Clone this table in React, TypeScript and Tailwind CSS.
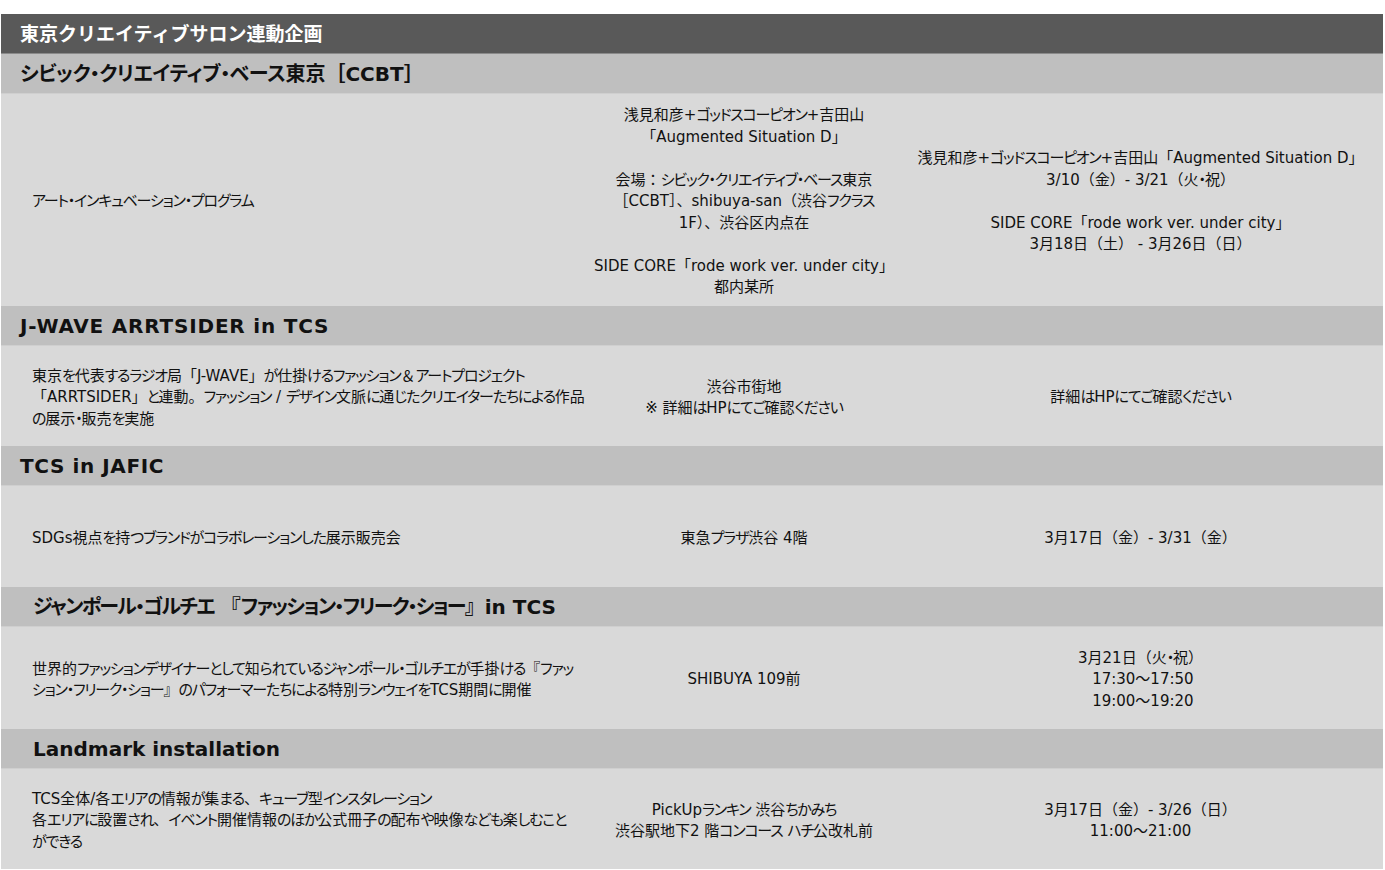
import React from "react";

type Row = {
  title: string;
  indent?: boolean;
  kanaCls: string;
  latinCls: string;
  c1: string[];
  c2: string[];
  c3: string[];
  h: string;
};

const rows: Row[] = [
  {
    title: "シビック・クリエイティブ・ベース東京［CCBT］",
    kanaCls: "[font-feature-settings:'palt'] tracking-[-0.4px]",
    latinCls: "tracking-[0px]",
    c1: ["アート・インキュベーション・プログラム"],
    c2: [
      "浅見和彦+ゴッドスコーピオン+吉田山",
      "「Augmented Situation D」",
      "",
      "会場：シビック・クリエイティブ・ベース東京",
      "［CCBT］、shibuya-san（渋谷フクラス",
      "1F）、渋谷区内点在",
      "",
      "SIDE CORE「rode work ver. under city」",
      "都内某所",
    ],
    c3: [
      "浅見和彦+ゴッドスコーピオン+吉田山「Augmented Situation D」",
      "3/10（金）- 3/21（火・祝）",
      "",
      "SIDE CORE「rode work ver. under city」",
      "3月18日（土） - 3月26日（日）",
    ],
    h: "h-[212px]",
  },
  {
    title: "J-WAVE ARRTSIDER in TCS",
    kanaCls: "[font-feature-settings:'palt'] tracking-[-1.2px]",
    latinCls: "tracking-[0.8px]",
    c1: [
      "東京を代表するラジオ局「J-WAVE」が仕掛けるファッション＆アートプロジェクト",
      "「ARRTSIDER」と連動。ファッション / デザイン文脈に通じたクリエイターたちによる作品",
      "の展示・販売を実施",
    ],
    c2: ["渋谷市街地", "※ 詳細はHPにてご確認ください"],
    c3: ["詳細はHPにてご確認ください"],
    h: "h-[100px]",
  },
  {
    title: "TCS in JAFIC",
    kanaCls: "[font-feature-settings:'palt'] tracking-[-1.2px]",
    latinCls: "tracking-[0.6px]",
    c1: ["SDGs視点を持つブランドがコラボレーションした展示販売会"],
    c2: ["東急プラザ渋谷 4階"],
    c3: ["3月17日（金）- 3/31（金）"],
    h: "h-[101px]",
  },
  {
    title: "ジャンポール・ゴルチエ 『ファッション・フリーク・ショー』in TCS",
    indent: true,
    kanaCls: "[font-feature-settings:'palt'] tracking-[-1.7px]",
    latinCls: "tracking-[0px]",
    c1: [
      "世界的ファッションデザイナーとして知られているジャンポール・ゴルチエが手掛ける『ファッ",
      "ション・フリーク・ショー』のパフォーマーたちによる特別ランウェイをTCS期間に開催",
    ],
    c2: ["SHIBUYA 109前"],
    c3: ["3月21日（火・祝）", "\u00a017:30～17:50", "\u00a019:00～19:20"],
    h: "h-[102px]",
  },
  {
    title: "Landmark installation",
    indent: true,
    kanaCls: "[font-feature-settings:'palt'] tracking-[-1.2px]",
    latinCls: "tracking-[0px]",
    c1: [
      "TCS全体/各エリアの情報が集まる、キューブ型インスタレーション",
      "各エリアに設置され、イベント開催情報のほか公式冊子の配布や映像なども楽しむこと",
      "ができる",
    ],
    c2: ["PickUpランキン 渋谷ちかみち", "渋谷駅地下2 階コンコース ハチ公改札前"],
    c3: ["3月17日（金）- 3/26（日）", "11:00～21:00"],
    h: "h-[100px]",
  },
];

const KANA = /([\u3040-\u30FF]+)/;

function Seg({ text, kanaCls }: { text: string; kanaCls: string }) {
  const parts = text.split(KANA);
  return (
    <>
      {parts.map((p, i) =>
        i % 2 === 1 ? (
          <span key={i} className={kanaCls}>
            {p}
          </span>
        ) : (
          <React.Fragment key={i}>{p}</React.Fragment>
        )
      )}
    </>
  );
}

const BODY_KANA = "[font-feature-settings:'palt'] tracking-[-1.2px]";

function Lines({ lines, center }: { lines: string[]; center?: boolean }) {
  return (
    <div className={center ? "text-center" : "text-left"}>
      {lines.map((l, i) => (
        <div key={i} className="whitespace-nowrap h-[21.5px] leading-[21.5px]">
          {l === "" ? "\u00a0" : <Seg text={l} kanaCls={BODY_KANA} />}
        </div>
      ))}
    </div>
  );
}

export default function App() {
  return (
    <div
      className="w-[1385px] h-[870px] bg-white pt-[14px] text-[#111]"
      style={{ fontFamily: '"DejaVu Sans", "Noto Sans CJK JP", sans-serif' }}
    >
      <div className="ml-px mr-[2px]">
        <div className="h-[40px] bg-[#595959] border-b border-[#8a8a8a] flex items-center pl-[19px]">
          <span
            className="text-white font-bold text-[19px]"
            style={{ fontFamily: '"Noto Sans CJK JP", sans-serif' }}
          >
            東京クリエイティブサロン連動企画
          </span>
        </div>
        {rows.map((r, i) => (
          <div key={i}>
            <div
              className={`h-[40px] bg-[#bfbfbf] border-b border-[#cfcfcf] flex items-center ${
                r.indent ? "pl-[32px]" : "pl-[19px]"
              }`}
            >
              <span className={`font-bold text-[20px] text-[#111] whitespace-nowrap ${r.latinCls}`}>
                <Seg text={r.title} kanaCls={r.kanaCls} />
              </span>
            </div>
            <div className={`${r.h} bg-[#d9d9d9] flex items-center pt-[4px] text-[15px]`}>
              <div className="w-[589px] pl-[31px] flex items-center">
                <Lines lines={r.c1} />
              </div>
              <div className="w-[308px] flex justify-center">
                <Lines lines={r.c2} center />
              </div>
              <div className="flex-1 flex justify-center">
                <Lines lines={r.c3} center />
              </div>
            </div>
          </div>
        ))}
      </div>
    </div>
  );
}
